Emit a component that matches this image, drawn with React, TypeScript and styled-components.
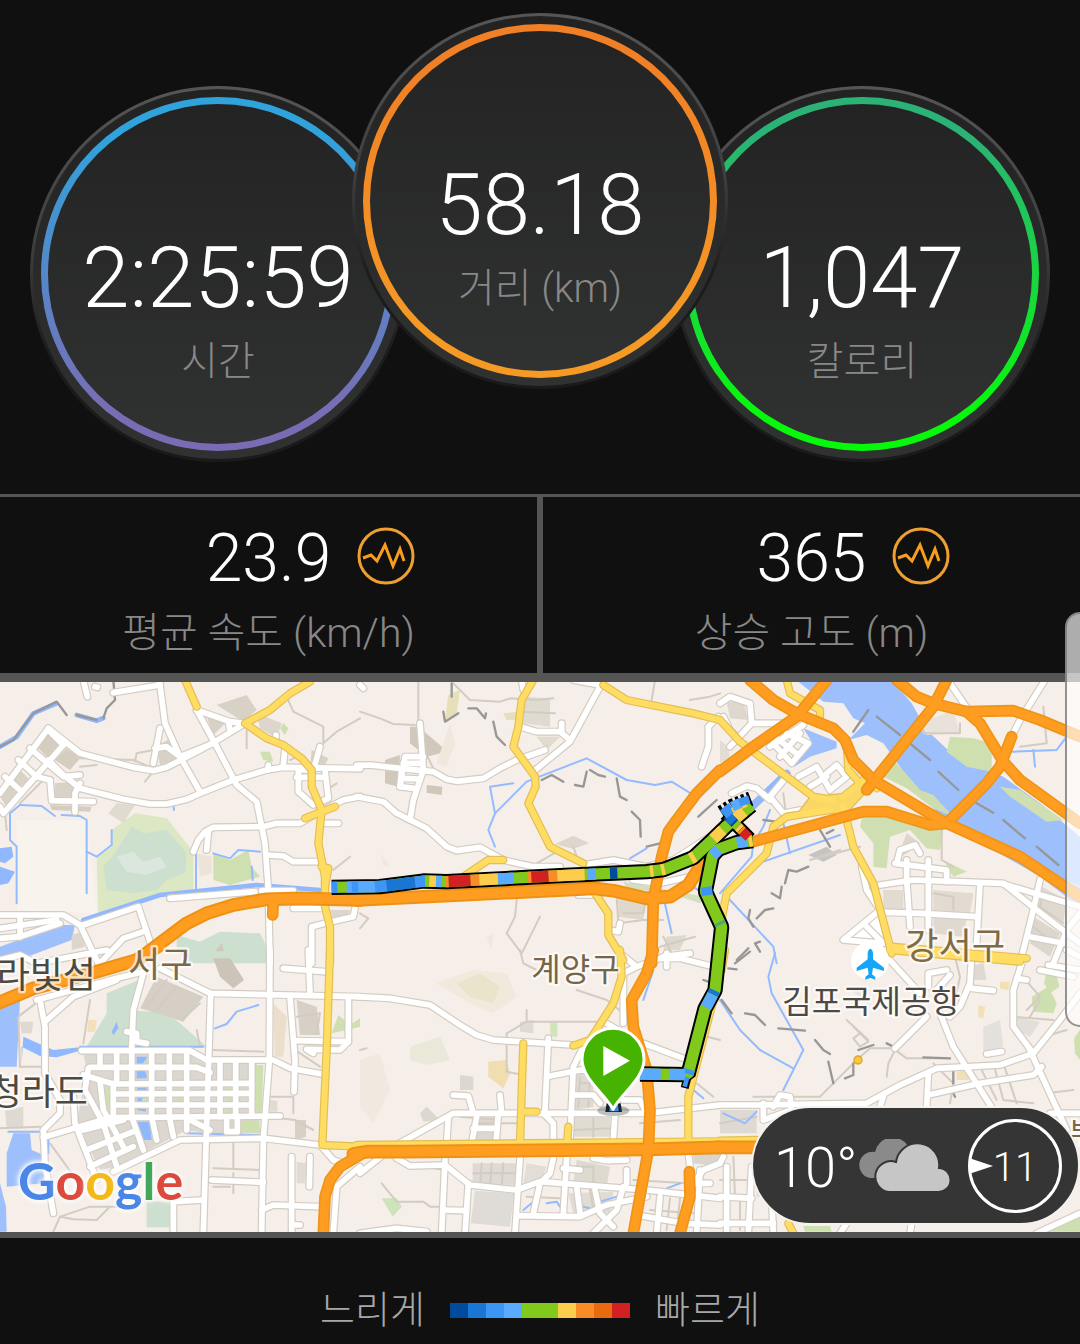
import React from "react";
import styled, { createGlobalStyle } from "styled-components";

const GlobalStyle = createGlobalStyle`
  * { box-sizing: border-box; }
  body {
    margin: 0;
    background: #101010;
    color: #fff;
    font-family: Roboto, "Noto Sans CJK KR", sans-serif;
    font-weight: 300;
  }
`;

const Page = styled.main`
  position: relative;
  min-height: 100vh;
  overflow: hidden;
  background: #101010;
`;

const Dials = styled.section`
  display: flex;
  justify-content: center;
  align-items: flex-start;
  padding: 13px 0 32px;
`;

const Dial = styled.article<{ $raised?: boolean }>`
  flex: none;
  width: 376px;
  height: 376px;
  padding: 3px;
  border-radius: 50%;
  background: linear-gradient(#565656, #3c3c3c 45%, #1c1c1c 70%, #1a1a1a);
  margin: ${(p) => (p.$raised ? "0 -54px" : "73px 0 0")};
  z-index: ${(p) => (p.$raised ? 1 : 0)};
`;

const DialRim = styled.div`
  height: 100%;
  padding: 8px;
  border-radius: 50%;
  background: linear-gradient(#222, #303231);
`;

const DialRing = styled.div<{ $from: string; $to: string }>`
  height: 100%;
  padding: 7px;
  border-radius: 50%;
  background: linear-gradient(${(p) => p.$from} 10%, ${(p) => p.$to} 90%);
`;

const DialFace = styled.div`
  height: 100%;
  padding-top: 120px;
  border-radius: 50%;
  background: linear-gradient(#232323, #303231);
  display: flex;
  flex-direction: column;
  align-items: center;
`;

const DialValue = styled.strong`
  font-size: 85px;
  line-height: 108px;
  font-weight: 300;
`;

const Caption = styled.span<{ $wide?: boolean }>`
  font-size: ${(p) => (p.$wide ? 41 : 40)}px;
  line-height: 60px;
  color: #888;
  white-space: nowrap;
`;

const Stats = styled.section`
  display: grid;
  grid-template-columns: 1fr 1fr;
  gap: 6px;
  padding-top: 3px;
  background: #555;
`;

const Stat = styled.article`
  height: 176px;
  padding-top: 22px;
  background: #101010;
  display: flex;
  flex-direction: column;
  align-items: center;
  gap: 4px;
`;

const StatTop = styled.div`
  width: 100%;
  display: grid;
  grid-template-columns: 1fr auto 1fr;
  align-items: start;
`;

const StatValue = styled.strong`
  grid-column: 2;
  font-size: 66px;
  line-height: 80px;
  font-weight: 300;
`;

const ChartButton = styled.button`
  width: 58px;
  height: 58px;
  margin: 8px 0 0 26px;
  padding: 0;
  border: 0;
  background: none;
  svg { display: block; }
`;

const MapPanel = styled.section`
  position: relative;
  border-top: 9px solid #555;
  border-bottom: 6px solid #555;
  > svg { display: block; width: 100%; height: auto; }
`;

const Logo = styled.span`
  position: absolute;
  left: 18px;
  bottom: 20px;
  font-family: Lato, sans-serif;
  font-weight: 700;
  font-size: 52px;
  line-height: 64px;
  text-shadow: 0 0 5px #fff, 0 0 5px #fff, 0 0 8px #fff;
`;

const Tint = styled.span<{ $c: string }>`
  color: ${(p) => p.$c};
`;

const Weather = styled.aside`
  position: absolute;
  right: 0;
  bottom: 7px;
  width: 329px;
  height: 119px;
  padding: 0 16px 0 21px;
  border: 2px solid #f4f2ef;
  border-radius: 60px;
  background: #353535;
  display: flex;
  align-items: center;
`;

const Temperature = styled.span`
  padding-top: 4px;
  font-size: 56px;
  line-height: 64px;
`;

const Wind = styled.div`
  position: relative;
  width: 94px;
  height: 94px;
  margin-left: auto;
  padding-top: 4px;
  border: 3px solid #fff;
  border-radius: 50%;
  display: flex;
  align-items: center;
  justify-content: center;
  font-size: 40px;
  svg { position: absolute; left: -2px; top: 36px; }
`;

const Legend = styled.footer`
  display: flex;
  justify-content: center;
  align-items: center;
  gap: 25px;
  padding-top: 42px;
`;

const LegendText = styled.span`
  font-size: 38px;
  line-height: 60px;
  color: #a8a8a8;
`;

const Scale = styled.div`
  display: flex;
`;

const Swatch = styled.i<{ $c: string }>`
  width: 18px;
  height: 15px;
  background: ${(p) => p.$c};
`;

const EdgeHandle = styled.div`
  position: absolute;
  top: 612px;
  right: 0;
  width: 15px;
  height: 415px;
  border: 2px solid rgba(120, 120, 120, 0.8);
  border-right: 0;
  border-radius: 16px 0 0 16px;
  background: rgba(255, 255, 255, 0.66);
`;

/* ---------- Map data: six survey sheets, each with its own origin ---------- */

type Sheet = "a" | "b" | "c" | "d" | "e" | "f";
const origin: Record<Sheet, [number, number]> = {
  a: [0, -6], b: [1080, -6], c: [2160, -6],
  d: [0, 804], e: [1080, 804], f: [2160, 804],
};
const sheets = Object.keys(origin) as Sheet[];
type Layer = Record<Sheet, string[]>;

const areas: Record<Sheet, [string, string][]> = {
  a: [
    ["#f9f3ee", "50,420 260,420 290,700 50,690"],
    ["#dce7c3", "290,535 335,500 335,450 405,400 500,415 580,515 580,640 480,650 295,710"],
    ["#cddfcf", "345,520 395,440 430,460 500,450 560,520 555,580 500,600 470,630 400,640 320,630 310,560"],
    ["#dbe7dc", "350,530 400,515 430,545 480,530 500,560 440,585 380,575"],
    ["#cfe0b0", "640,520 690,540 745,510 755,560 780,590 690,615 640,600"],
    ["#eee3d8", "590,520 635,530 635,580 600,590"],
    ["#cddfcf", "530,765 600,785 660,755 780,760 800,800 800,850 570,850 530,810"],
    ["#8fb8ff", "0,505 35,500 40,530 15,550 0,545"],
    ["#8fb8ff", "0,560 45,575 25,610 0,615"],
    ["#9dbffc", "0,800 180,735 225,735 215,780 70,835 0,845"],
    ["#d5cdc0", "145,160 180,195 145,235 110,200"],
    ["#d5cdc0", "200,205 240,235 210,270 165,240"],
    ["#d9d2c6", "50,260 90,300 60,320 30,290"],
    ["#d9d2c6", "30,315 55,345 20,380 0,350"],
    ["#d9d2c6", "165,310 220,305 220,350 165,355"],
    ["#e0dad0", "325,400 350,370 405,375 370,430"],
    ["#d8d1c6", "650,75 740,45 770,90 730,125 690,100"],
    ["#d8d1c6", "620,110 680,125 640,165"],
    ["#dcd6cc", "770,100 845,130 830,175 780,145"],
    ["#cfe0b0", "780,215 810,215 820,245 790,240"],
    ["#cfe0b0", "850,130 865,145 855,165 840,145"],
    ["#d8d1c6", "935,210 985,235 970,265 930,260"],
    ["#d8d1c6", "470,200 510,175 530,240 480,255"],
    ["#d5cdc0", "150,375 275,380 270,395 155,390"],
    ["#ddd6cc", "215,765 245,755 255,800 215,810"],
    ["#ddd6cc", "990,690 1050,690 1045,710 1000,720"],
    ["#d0c8bb", "640,820 665,790 680,840"],
  ],
  b: [
    ["#d0c8bb", "150,140 175,140 240,195 258,215 200,230 150,190"],
    ["#d0c8bb", "75,240 120,225 115,320 75,310"],
    ["#cfc7ba", "200,315 247,320 245,345 200,338"],
    ["#e0dbd0", "490,50 570,55 570,140 490,130"],
    ["#e5dfc0", "430,100 480,95 475,120 440,120"],
    ["#e6dfb8", "265,45 300,30 290,100 255,120"],
    ["#f0e8dc", "270,130 285,190 260,260 230,250 250,190"],
    ["#dcd6cc", "585,492 640,467 687,490 640,507"],
    ["#e0dacf", "530,170 600,170 560,210"],
    ["#dfd8cc", "775,650 860,650 850,720 775,710"],
    ["#dfd8cc", "920,770 980,765 960,810 910,810"],
    ["#d3dfbd", "790,605 1035,650 1020,670 930,640 800,625"],
    ["#efe8df", "60,520 90,560 70,555"],
    ["#efe8df", "380,770 400,760 395,810"],
  ],
  c: [
    ["#9dbffc", "235,5 520,5 575,70 620,150 700,225 850,290 960,370 1080,470 1080,680 960,590 700,440 640,385 590,335 540,260 490,190 440,165 385,180 435,130 400,115 370,70 310,65"],
    ["#9dbffc", "250,145 350,185 350,205 270,230 220,262 235,225 275,185"],
    ["#cfe0b0", "690,170 760,175 815,190 815,275 740,260 680,215"],
    ["#cdddb0", "520,240 575,300 600,330 640,345 700,410 640,385 560,325 490,290"],
    ["#cfdfb2", "430,395 520,410 620,430 670,450 660,510 620,505 570,450 510,470 500,565 460,560 460,490 420,440"],
    ["#cfdfb2", "840,320 900,330 1030,420 980,425 870,350"],
    ["#cfdfb2", "670,540 740,575 700,590"],
    ["#e4ddd4", "0,180 25,200 30,240 0,250"],
    ["#ddd7ce", "20,65 70,65 85,120 30,115"],
    ["#ddd6cc", "560,460 600,490 560,520 530,540"],
    ["#e1dbd2", "490,630 550,630 550,690 490,690"],
    ["#e1dbd2", "640,630 760,640 750,700 640,690"],
    ["#dfd9d0", "640,715 740,715 730,770 640,760"],
    ["#dfd9d0", "965,620 1040,660 1030,730 950,680"],
    ["#dcd6cd", "940,710 1020,760 990,830 930,790"],
    ["#c5c3c1", "265,525 320,500 350,525 310,545"],
    ["#e8e2da", "600,130 700,90 720,160 620,165"],
    ["#fff", "370,775 480,690 500,790"],
  ],
  d: [
    ["#9dbffc", "0,165 60,150 50,350 0,350"],
    ["#8fb8ff", "70,260 160,300 240,292 240,302 170,322 120,318 65,290 65,340"],
    ["#9dbffc", "40,550 90,550 95,600 130,615 130,700 20,710 20,610"],
    ["#9dbffc", "0,700 18,770 20,845 0,845"],
    ["#cddfcf", "320,130 430,85 390,180 500,190 540,220 620,290 260,290 320,190"],
    ["#cddfcf", "585,5 800,0 800,38 690,40"],
    ["#cddfcf", "440,755 510,755 510,832 440,832"],
    ["#d6cfc6", "470,80 610,140 550,215 420,175"],
    ["#ccc4b8", "640,25 690,25 732,90 700,115 660,80"],
    ["#ebdfcb", "820,160 860,200 850,320 825,320"],
    ["#f3dfb8", "265,210 290,210 285,245 262,245"],
    ["#dedad2", "60,215 100,215 95,250 65,250"],
    ["#dedad2", "15,480 70,470 70,535 20,535"],
    ["#dcd7d0", "250,310 560,310 620,345 620,550 560,540 350,650 300,660 230,520 260,360"],
    ["#dcd7d0", "632,335 770,335 780,550 632,550"],
    ["#8fb8ff", "410,320 440,320 440,385 410,385"],
    ["#8fb8ff", "412,410 440,410 438,485 412,480"],
    ["#8fb8ff", "412,515 450,515 455,570 420,570"],
    ["#cfe0b0", "425,345 440,325 440,375"],
    ["#cfe0b0", "425,450 440,430 438,480"],
    ["#cfe0b0", "310,410 328,415 326,470 312,475"],
    ["#cfe0b0", "528,410 548,440 535,480"],
    ["#cfe0b0", "680,410 700,410 700,490 680,490"],
    ["#cfe0b0", "768,345 790,345 785,490 768,480"],
    ["#cfe0b0", "725,512 778,512 778,548 722,545"],
    ["#cfe0b0", "995,250 1015,195 1050,225 1080,205 1080,230 1040,240"],
    ["#d6d0c6", "890,150 950,170 960,255 900,255"],
    ["#d6d0c6", "885,510 918,510 918,560 885,570"],
    ["#e0dcd5", "890,635 920,640 915,700 890,700"],
    ["#e0dcd5", "808,450 832,452 832,485 808,485"],
    ["#8fb8ff", "350,215 355,235 340,255 335,245"],
  ],
  e: [
    ["#efeadb", "230,100 340,60 440,70 470,140 400,190 330,160"],
    ["#e9e4cb", "290,100 360,70 420,110 400,160 330,140"],
    ["#eae8d8", "150,290 240,260 270,330 200,345 150,330"],
    ["#f0e9e0", "0,330 60,310 90,420 40,520 0,470"],
    ["#f0ddb0", "385,335 440,330 450,370 430,415 385,380"],
    ["#dedbd3", "480,215 520,210 520,250 480,245"],
    ["#d0e3bb", "570,215 592,220 592,262 572,258"],
    ["#dfdcd7", "345,722 462,730 450,830 332,820"],
    ["#dfdbd4", "338,640 475,640 472,705 338,700"],
    ["#dcd7cf", "345,500 410,500 410,570 340,570"],
    ["#e0dbd3", "640,500 750,500 750,560 640,560"],
    ["#dedad2", "640,370 700,360 700,470 640,480"],
    ["#cde3ba", "65,745 110,745 125,770 98,800"],
    ["#dad6cf", "1000,600 1080,600 1080,650 1000,640"],
    ["#dedad2", "650,630 750,650 740,710 640,700"],
    ["#e2ded7", "500,640 560,650 540,700 490,700"],
    ["#e0dcd5", "625,730 760,725 750,790 640,790"],
    ["#dcd7cf", "300,375 340,380 340,420 300,420"],
    ["#dcd7cf", "180,490 200,470 240,510 190,515"],
  ],
  f: [
    ["#cfe0b0", "980,65 1010,75 1018,110 990,130 972,100"],
    ["#cfe0b0", "935,140 985,110 1010,160 1000,190 940,185"],
    ["#cfe0b0", "1062,265 1080,240 1080,330 1065,310"],
    ["#cfe0b0", "250,828 330,828 335,845 255,845"],
    ["#cfe0b0", "980,845 1080,800 1080,845"],
    ["#e4e1dd", "790,230 840,210 850,290 790,310"],
    ["#e2deda", "880,200 960,215 930,260 890,240"],
    ["#f1dfb5", "710,365 750,360 745,390 710,390"],
    ["#f1dfb5", "840,95 870,95 865,120 840,115"],
    ["#f1dfb5", "775,165 795,170 790,205 775,200"],
    ["#dedad3", "0,480 110,480 110,550 0,550"],
    ["#dedad3", "110,620 160,640 150,740 110,740"],
    ["#e5e1db", "390,120 430,110 420,140"],
    ["#dedad3", "740,50 790,40 800,90 760,90"],
  ],
};

const lanes: Layer = {
  a: ["860,50 880,95 970,140 970,190 1010,155 1080,115", "405,245 410,220 460,210", "1000,570 1050,530", "240,235 400,240 460,265", "740,150 740,205", "290,255 240,260", "20,450 15,400", "905,225 870,240", "1010,310 980,330", "130,300 60,370", "435,305 455,280"],
  b: ["175,0 175,130", "0,95 60,115 100,132 165,135", "280,10 330,60 420,65 450,55 530,60 580,55", "480,95 585,100", "470,660 465,710 440,760 485,820 540,710", "640,500 655,545", "530,550 600,510", "885,0 875,60", "770,650 775,730 850,720 910,720", "990,60 1050,50 1080,40", "910,770 940,830", "860,650 850,700 790,700", "900,800 1005,770", "0,700 25,715 0,745", "200,225 220,265"],
  c: ["600,120 610,160 720,160 720,130", "970,80 980,190 900,200", "665,450 665,540 700,560", "190,340 200,420 260,410", "640,640 700,650 700,690", "360,510 270,540 420,500", "970,640 960,680 1030,730", "940,740 1000,790", "1020,600 1080,620"],
  d: ["60,350 55,200 120,150", "60,350 130,350", "160,845 180,800 270,770 370,770", "180,800 220,808 290,810 330,770", "640,655 780,660", "700,580 700,655", "270,150 250,280", "0,535 120,530", "890,200 960,190 950,250", "805,440 880,440 880,490", "640,710 690,710", "545,210 600,160", "500,90 440,170", "530,110 470,180", "640,300 790,305", "150,580 230,690", "590,240 600,290", "800,500 885,510 940,540", "700,670 700,730", "885,300 960,350"],
  e: ["440,365 440,250 500,215 720,215", "440,365 490,375", "65,700 110,755 190,755 210,770 245,770", "360,715 365,640", "395,640 390,715", "430,640 425,715", "340,670 470,670", "480,0 490,40 530,60", "650,120 740,150 790,190", "500,180 500,215", "300,500 420,510", "470,520 350,520", "660,380 655,470", "690,380 685,470", "660,400 740,400", "640,540 760,535", "700,500 700,560", "1060,440 1010,400", "640,650 700,650 700,700", "690,720 700,780", "820,690 980,700", "870,780 1000,790", "0,300 20,295", "150,640 250,660", "500,740 600,745", "1000,250 1080,270", "930,745 920,840", "960,745 950,840", "840,520 960,510"],
  f: ["300,440 410,330 450,295 520,295 560,325 690,325", "400,230 445,275 420,290 400,265 420,250", "500,380 505,340 525,300", "380,210 445,270", "780,350 830,450", "850,340 890,460", "890,60 960,140 920,180", "880,200 1000,210", "0,520 110,500", "40,620 45,740", "980,430 1060,420", "970,260 1040,240", "820,340 850,450 940,460", "300,440 240,440 100,440", "700,0 720,80 700,170", "930,200 960,150", "0,690 90,690", "60,750 60,840", "640,340 700,400 690,460"],
};

const streets: Layer = {
  a: ["145,145 240,220 400,262 460,272 500,262 600,210 645,185 735,130", "590,90 690,125 735,130", "685,125 690,150", "145,145 0,340", "190,195 10,400 0,380", "90,205 190,290 240,285", "145,240 190,285 240,325 370,358 450,372 500,372 560,358 600,340 700,300 800,270 850,262 1080,266", "145,150 190,195", "55,240 110,290 150,300", "15,290 65,335", "150,300 155,362 280,365", "225,395 225,340 240,310", "478,0 495,130 540,230 600,335", "480,145 460,250", "465,205 500,200 540,230 640,190", "590,90 645,190 710,315 770,365 795,490 805,630 810,850", "340,38 480,15", "250,0 262,50", "580,515 595,480 615,455 640,442 790,440 830,430 900,430 960,395 1030,360 1080,350", "625,455 620,510", "800,525 850,528 880,545 960,545", "510,655 765,635", "785,632 880,632", "855,205 850,255", "960,200 940,270 895,270 895,335 940,375 985,355 975,270", "975,292 890,292", "965,430 1015,430", "0,705 190,705 240,735 295,850", "0,745 170,720", "0,775 60,770 180,730", "60,710 60,770", "250,735 415,680 455,800", "300,850 370,775 430,755", "880,685 965,685", "935,850 935,740 975,730 1060,710 1065,685", "828,165 828,180", "805,255 805,270", "285,20 292,22"],
  b: ["-10,256 30,255 120,265 220,275 260,298 290,304 370,295 420,265 470,240 555,210", "180,130 190,270 160,360 150,420", "190,230 135,230 120,320 160,325", "125,265 120,320", "130,295 175,297", "130,250 180,250", "-10,350 70,365 110,400 200,445 260,500 290,512 360,502 430,540 520,560 600,560", "720,20 630,185 520,275", "480,140 530,155 600,155 630,180", "605,130 605,155", "1075,110 1045,140 1045,200 1025,260", "670,555 760,540 860,560 940,540 1080,450", "820,600 900,610 990,590", "655,645 720,645", "780,730 775,755 750,750", "485,0 490,30", "640,0 720,15", "0,15 10,25", "990,820 910,830"],
  c: ["0,70 30,50 90,70 95,130 30,200", "95,130 200,130", "50,170 30,150 10,110", "150,200 250,135", "160,190 215,250 265,190 200,160", "180,230 240,160", "170,175 235,225", "235,290 290,260 330,330 380,290 350,255 320,280", "270,320 320,290", "200,290 150,350 190,400 240,390", "35,340 80,318 110,325 150,360", "480,615 580,600 850,610 950,690 1080,790", "850,612 1080,680", "530,550 540,510 585,495 600,520", "525,550 680,570 680,605", "560,540 560,600 570,740", "625,540 625,750", "495,697 600,700 770,710", "780,610 770,790", "960,600 940,690 900,850", "930,770 1030,790", "1000,850 1040,750 1080,700", "975,0 900,120 875,170", "690,10 745,90", "425,560 440,630 480,690 370,780 490,790 440,740", "1040,810 1080,830"],
  d: ["110,150 350,85 430,65", "430,70 400,180 395,300", "120,150 135,230 135,370 180,450 180,490 130,540 135,640 160,790", "135,215 220,140 350,90", "480,55 630,130 1080,140", "632,130 610,850", "810,0 808,330 790,570 785,850", "925,0 930,130", "870,140 885,330 882,425", "850,55 975,65", "245,302 570,302 620,330 820,330 870,355 965,372", "890,272 1045,275", "1045,145 1045,275 1020,300 920,298 940,310", "300,310 300,345", "350,310 350,390", "395,300 395,500 430,600", "455,310 455,500 470,570", "508,310 508,500 520,560", "560,310 560,540", "660,335 660,500", "707,335 707,500", "755,335 755,490", "270,352 590,352 630,368", "250,375 340,402 750,400", "340,432 750,430", "340,465 750,465", "130,562 330,503 840,498", "340,665 540,570 790,565 960,585", "265,355 255,420 310,520 350,650", "220,440 225,520 290,690", "300,395 310,480 370,590", "340,400 340,500", "260,600 400,545", "250,540 370,510", "270,650 400,590", "380,245 410,250 410,275 440,280", "680,505 680,545 712,545 712,505", "560,505 630,540", "635,690 790,697", "520,850 520,755 610,750", "785,780 820,765 955,770", "875,620 875,850", "930,620 928,710", "875,825 900,825", "965,590 1000,630 1030,640", "1080,650 1010,710 1000,850", "0,30 60,15 110,40 320,0"],
  e: ["-10,140 90,145 210,165 300,225 350,255 400,270 640,285", "565,265 555,480", "0,670 100,590 280,490 860,490 1080,465", "560,380 660,360 750,370", "670,290 640,350 630,570", "640,435 700,435 720,460", "280,435 325,438 340,490", "420,435 425,490", "265,500 260,580", "350,500 335,580", "415,490 408,580", "340,535 410,535", "550,490 580,520 580,570", "765,490 760,570", "790,450 840,450 855,480", "850,280 970,325", "740,220 790,250", "780,10 830,50 790,70 790,220", "830,50 900,25 960,25 1080,55", "920,10 920,50", "110,625 150,648 255,645 330,705 470,720 540,695 860,720 1080,745", "255,630 245,850", "325,700 315,850", "480,625 465,850", "580,625 570,670 540,700 520,790", "620,625 610,790", "700,625 740,632 800,630", "610,655 660,660", "470,797 660,800 740,765 860,740", "250,780 320,782", "650,710 660,790", "705,720 720,790 760,830", "790,710 770,780 700,850", "800,660 800,700", "900,740 890,850", "830,795 970,820 1080,825", "985,610 990,650", "1020,660 1010,850", "1080,640 1030,660 1000,700 1050,700", "0,850 110,835 200,845"],
  f: ["0,465 110,465 440,460 540,405 650,355 840,345 940,310 1020,210 1080,130", "490,440 480,470", "625,370 620,470", "625,435 780,400 940,375 965,350", "660,190 700,290 820,480", "525,295 620,200", "600,130 500,20", "925,290 1040,540", "905,40 880,120 880,230 940,310", "755,20 750,100 720,170 690,200", "755,115 820,122", "800,312 845,305", "625,110 625,70 680,60", "690,75 650,120", "920,90 890,85", "160,470 180,435 210,440 215,480 130,510 130,460", "20,650 20,850", "95,650 85,850", "0,740 95,745", "0,820 160,820", "155,745 160,850", "0,640 10,620", "950,850 1080,790", "990,490 1080,490", "380,820 360,850", "575,820 570,850", "985,45 1080,60", "960,60 1060,80"],
};

const creeks: Layer = {
  a: ["60,375 125,378 165,408", "60,375 30,400 30,480 50,500 50,670", "185,405 240,408 260,420 260,640", "260,515 290,530 335,495 335,450", "588,520 588,635", "640,520 690,535 715,510 780,515", "755,560 758,600", "520,375 522,390"],
  b: ["405,500 385,450 405,400 390,320 460,310", "405,400 500,305 680,235 800,300 885,315 935,305 1000,345", "810,535 860,505", "910,650 935,760", "1000,620 1080,680"],
  c: ["130,545 360,465", "30,660 160,800 170,850", "150,390 130,440 100,490 95,530 0,640", "820,205 880,215 1010,210 1040,170", "940,210 945,260", "190,430 210,520"],
  d: ["240,290 610,290", "645,235 680,222 710,185 775,165", "25,545 120,545", "145,570 145,610", "560,550 780,555"],
  e: ["880,60 850,150", "490,780 520,755", "670,770 690,775", "720,755 770,740", "560,760 590,755 600,770", "790,755 860,740", "920,715 960,700", "1000,420 1030,445"],
  f: ["165,10 145,80 155,130 250,300 190,420", "0,150 60,240 120,300 220,355", "10,490 75,520 110,485"],
};

const trails: Layer = {
  a: ["0,200 40,180 100,100 170,65 200,105", "230,105 290,120", "310,115 320,85 345,60 340,0"],
  b: ["275,10 275,50", "250,95 255,125 295,100", "325,85 350,85 375,115 378,100", "400,125 410,170 435,195", "545,300 575,285 610,305", "645,315 670,320 680,275", "690,270 715,285 735,290", "770,295 780,350 800,360", "815,395 840,420 842,470", "860,500 900,490", "1015,410 1070,360"],
  c: ["470,110 540,165", "570,190 630,240", "655,275 715,330", "770,370 820,398", "850,420 915,475", "950,500 1015,555", "445,90 400,155", "195,610 205,570 230,575 265,560", "185,620 180,655 155,640", "160,685 135,690 110,715", "90,690 85,715 100,740", "300,450 330,500", "320,460 340,450", "120,785 105,790 120,815", "130,420 170,425", "50,840 85,805"],
  d: [],
  e: ["1030,90 1045,95"],
  f: ["45,40 90,5", "25,55 50,58", "5,150 35,190", "75,190 105,195 135,225", "175,235 255,242", "285,270 310,300 330,312", "325,335 340,400", "400,340 400,375 375,385", "415,300 460,285", "500,280 520,290", "610,322 690,325", "700,365 700,400", "700,430 705,440"],
};

const avenues: Layer = {
  a: ["555,0 590,80", "930,5 870,40 810,90 735,130 800,175 850,195 905,235 935,270 935,320 965,390 955,490 975,590 975,680 990,740 990,850", "915,415 1005,380", "965,560 985,565 975,620"],
  b: ["520,0 485,60 475,140 460,200 525,290 527,320 505,370 570,500 620,525 670,550", "730,15 800,60 1000,100 1080,120", "310,590 385,540 430,540", "705,640 745,700 745,765 790,840"],
  c: ["200,0 210,40 300,90 300,110", "0,120 60,185 280,350 340,360", "380,190 385,270 420,310 370,350", "430,300 470,325", "330,390 200,410 160,440 140,520 20,640 0,740", "370,380 400,500 460,610 515,820", "515,800 920,835"],
  d: ["990,0 980,300 967,585 1080,590"],
  e: ["490,280 480,580", "490,485 530,485", "-10,585 1080,574", "625,530 622,570", "640,287 690,270 760,160 785,80 780,0", "985,575 985,440 1060,150 1080,60"],
  f: ["510,0 900,35", "0,572 110,570", "205,820 220,850", "15,0 5,60"],
};

const highways: Layer = {
  a: ["820,660 818,705"],
  b: ["1080,270 1010,340 950,420 925,455 905,530 880,660 875,850"],
  c: ["90,0 160,60 230,100 340,145 375,180 400,240 460,300 670,425 900,530 1080,650", "320,0 230,110 100,200 0,275", "440,330 640,80 680,0", "530,0 590,50 640,70 740,95 880,92 960,120 1080,170", "740,95 780,130 850,245 900,300 1080,430", "875,170 840,260 800,310 680,430 630,435 500,395 430,395 100,485"],
  d: ["970,850 975,740 990,690 1020,650 1080,615"],
  e: ["880,0 860,70 815,150 820,230 860,360 870,480 865,600 820,850", "988,665 990,740 960,850"],
  f: [],
};

const trunks: Layer = {
  a: ["400,850 480,790 560,730 620,700 700,675 800,658 900,655 1080,660"],
  b: ["-10,660 300,645 700,625 760,632 860,655 930,650 985,615 1040,530"],
  c: [],
  d: ["-20,165 100,115 290,65 410,30 480,-15"],
  e: ["-20,612 20,605 130,605 860,598 1080,592"],
  f: ["-10,592 110,592"],
};

const Lines = ({ layer, color, width }: { layer: Layer; color: string; width: number }) => (
  <g fill="none" stroke={color} strokeWidth={width} strokeLinecap="round" strokeLinejoin="round">
    {sheets.map((s) => (
      <g key={s} transform={`translate(${origin[s].join(" ")})`}>
        {layer[s].map((points, i) => <polyline key={i} points={points} />)}
      </g>
    ))}
  </g>
);

/* ---------- Ride track, coloured by speed ---------- */

const speed = ["#004b9b", "#1976d2", "#3d95f5", "#5aabff", "#82c91e", "#82c91e", "#fccd4d", "#fa8c28", "#ea6a10", "#d32020"];
const [navy, blue, sky, pale, green, , yellow, orange, , red] = speed;

const westLeg: [number, number][] = [[995, 616], [1140, 614], [1270, 597], [1340, 599], [1680, 581], [1940, 569], [1990, 563], [2080, 527], [2145, 466], [2180, 432], [2254, 370]];
const westBands: [number, number, string][] = [
  [996, 1012, sky], [1040, 1125, pale], [1055, 1075, sky], [1125, 1162, sky], [1160, 1246, blue], [1246, 1276, sky],
  [1276, 1288, green], [1288, 1308, yellow], [1308, 1326, pale], [1336, 1346, orange], [1346, 1412, red], [1412, 1438, orange],
  [1438, 1494, yellow], [1494, 1540, pale], [1584, 1594, orange], [1594, 1646, red], [1646, 1672, orange], [1672, 1754, yellow],
  [1764, 1788, pale], [1830, 1852, navy], [1950, 1960, yellow], [1984, 1994, yellow], [2072, 2084, yellow], [2140, 2168, yellow],
  [2206, 2232, yellow], [2242, 2254, green],
];
const yAt = (x: number) => {
  const i = Math.max(1, westLeg.findIndex((p) => p[0] >= x));
  const [x0, y0] = westLeg[i - 1];
  const [x1, y1] = westLeg[i];
  return y0 + ((x - x0) / (x1 - x0)) * (y1 - y0);
};

const returnLeg = "2258,476 2210,482 2155,502 2137,522 2116,628 2165,735 2145,925 2115,980 2064,1178 1920,1176";
const returnBands: [string, string][] = [
  ["2257,476 2246,478", yellow], ["2240,478 2210,482", pale], ["2156,502 2138,520", pale], ["2118,615 2122,640", sky], ["2158,720 2162,728", "#4aa87a"],
  ["2144,925 2138,938", blue], ["2138,938 2118,976", pale], ["2068,1162 2064,1176", sky],
  ["2055,1178 2010,1177", pale], ["1982,1177 1920,1176", pale],
];

const Track = () => (
  <g fill="none" strokeLinejoin="bevel">
    <g stroke="#000">
      <polyline points={westLeg.map((p) => p.join(",")).join(" ")} strokeWidth={46} />
      <polyline points="2176,396 2250,470" strokeWidth={40} />
      <polyline points={returnLeg} strokeWidth={46} />
      <polyline points="2064,1180 2054,1218" strokeWidth={24} />
      <polyline points="2164,392 2196,372 2252,350" strokeWidth={44} strokeDasharray="10 8" />
    </g>
    <g stroke={green} strokeWidth={34}>
      <polyline points={westLeg.map((p) => p.join(",")).join(" ")} />
      <polyline points={returnLeg} />
    </g>
    <g strokeWidth={34}>
      {westBands.map(([a, b, c], i) => <line key={i} x1={a} y1={yAt(a)} x2={b} y2={yAt(b)} stroke={c} />)}
      {returnBands.map(([p, c], i) => <polyline key={i} points={p} stroke={c} />)}
    </g>
    <g strokeWidth={28}>
      <polyline points="2180,400 2205,425" stroke={navy} />
      <polyline points="2186,406 2200,420" stroke={blue} />
      <polyline points="2205,425 2214,434" stroke={green} />
      <polyline points="2214,434 2222,442" stroke={yellow} />
      <polyline points="2222,442 2228,448" stroke={orange} />
      <polyline points="2228,448 2246,466" stroke={red} />
      <polyline points="2170,398 2196,375" stroke={sky} strokeWidth={32} />
      <polyline points="2196,385 2240,366" stroke={yellow} strokeWidth={16} />
      <polyline points="2196,374 2222,362" stroke={pale} strokeWidth={30} />
      <polyline points="2218,362 2248,352" stroke={sky} strokeWidth={24} />
      <polyline points="2062,1185 2054,1214" stroke={sky} strokeWidth={14} />
    </g>
  </g>
);

const places: [string, number, number, number, string, "start" | "end"][] = [
  ["라빛섬", 288, 918, 108, "#4a4a40", "end"],
  ["서구", 384, 885, 105, "#7a6848", "start"],
  ["계양구", 1594, 896, 96, "#75664a", "start"],
  ["강서구", 2715, 832, 109, "#7f6b48", "start"],
  ["김포국제공항", 2346, 994, 97, "#4b4a46", "start"],
  ["청라도", 264, 1268, 108, "#4a4a40", "end"],
  ["부", 3206, 1384, 84, "#75664a", "start"],
];

const RideMap = () => (
  <svg viewBox="0 0 3240 1650" role="img" aria-label="지도">
    <rect width="3240" height="1650" fill="#f6eee8" />
    {sheets.map((s) => (
      <g key={s} transform={`translate(${origin[s].join(" ")})`}>
        {areas[s].map(([fill, points], i) => <polygon key={i} fill={fill} points={points} />)}
      </g>
    ))}
    <Lines layer={lanes} color="#d3ccc2" width={6} />
    <Lines layer={creeks} color="#93bbff" width={6} />
    <g fill="none" stroke="#8fb8ff" strokeWidth={14} strokeLinecap="round">
      <polyline points="0,194 50,165 100,94 170,64" />
      <polyline points="230,99 290,116 310,108" />
      <polyline points="250,714 480,639 770,609 960,624" />
      <polyline points="2250,380 2360,275" strokeWidth={24} />
    </g>
    <Lines layer={trails} color="#979797" width={7} />
    <Lines layer={streets} color="#d2ccc2" width={24} />
    <Lines layer={streets} color="#fff" width={17} />
    <Lines layer={avenues} color="#e3bd55" width={25} />
    <polygon points="2430,345 2530,334 2590,284 2595,334 2540,394 2390,398" fill="#fbd866" stroke="#e3bd55" strokeWidth={4} />
    <Lines layer={avenues} color="#ffdd63" width={18} />
    <Lines layer={highways} color="#ef9417" width={35} />
    <Lines layer={trunks} color="#ee9214" width={41} />
    <Lines layer={highways} color="#ff9d20" width={25} />
    <Lines layer={trunks} color="#ff9d20" width={29} />
    <circle cx={2574} cy={1134} r={12} fill="#fbc83e" stroke="#d9a52c" strokeWidth={4} />
    <Track />
    <circle cx={2610} cy={836} r={57} fill="#fff" />
    <path
      transform="translate(2611 838)"
      fill="#17a5f7"
      d="M0,-38q7,2 8,14v18l33,25v10l-33,-10-3,20 10,8v8l-15,-5-15,5v-8l10,-8-3,-20-33,10v-10l33,-25v-18q1,-12 8,-14z"
    />
    <g fontFamily='"Noto Sans CJK KR", sans-serif' fontWeight={400} stroke="#fff" strokeOpacity={0.7} strokeWidth={14} strokeLinejoin="round" paintOrder="stroke">
      {places.map(([name, x, y, size, fill, anchor]) => (
        <text key={name} x={x} y={y} fontSize={size} fill={fill} textAnchor={anchor}>{name}</text>
      ))}
    </g>
    <ellipse cx={1840} cy={1286} rx={48} ry={16} fill="#000" opacity={0.25} />
    <path d="M1820,1264h42l4,26h-50z" fill="#10202c" />
    <path d="M1830,1268h24l2,20h-28z" fill="#3b8fdf" />
    <path
      d="M1839,1282C1820,1240 1746,1192 1746,1132a93,93 0 0 1 186,0C1932,1192 1858,1240 1839,1282z"
      fill="#46b300"
      stroke="#fff"
      strokeWidth={9}
      strokeLinejoin="round"
    />
    <path d="M1810,1092l80,44-80,46z" fill="#fff" />
  </svg>
);

const PulseIcon = () => (
  <svg viewBox="0 0 58 58" width="58" height="58" fill="none" stroke="#f99d1c" strokeWidth="3" strokeLinejoin="miter">
    <circle cx="29" cy="29" r="27" stroke="#ee9f30" />
    <path d="M6 31l8-3 6 6 8-16 8 21 7-17 4 12" />
  </svg>
);

const CloudIcon = () => (
  <svg viewBox="0 0 94 54" width="94" height="54">
    <path fill="#8a8a8a" d="M13 39a13 13 0 0 1 5-26A18 18 0 0 1 51 7L40 39z" />
    <path
      fill="#c6c6c6"
      stroke="#353535"
      strokeWidth="2"
      d="M32 53a15.500 15.500 0 1 1 7-30A21.500 21.500 0 0 1 82 29a12 12 0 0 1-1 24z"
    />
  </svg>
);

const dials = [
  { value: "2:25:59", label: "시간", from: "#30a3dc", to: "#7a6cb4" },
  { value: "58.18", label: "거리 (km)", from: "#f07f26", to: "#f59b25", raised: true },
  { value: "1,047", label: "칼로리", from: "#2bb277", to: "#08f80c" },
];

const stats = [
  { value: "23.9", label: "평균 속도 (km/h)" },
  { value: "365", label: "상승 고도 (m)" },
];

const google: [string, string][] = [["G", "#4a86e8"], ["o", "#dc4a3e"], ["o", "#f3b916"], ["g", "#4a86e8"], ["l", "#3fa65a"], ["e", "#dc4a3e"]];

export default function App() {
  return (
    <Page>
      <GlobalStyle />
      <Dials>
        {dials.map((d) => (
          <Dial key={d.label} $raised={d.raised}>
            <DialRim>
              <DialRing $from={d.from} $to={d.to}>
                <DialFace>
                  <DialValue>{d.value}</DialValue>
                  <Caption>{d.label}</Caption>
                </DialFace>
              </DialRing>
            </DialRim>
          </Dial>
        ))}
      </Dials>
      <Stats>
        {stats.map((s) => (
          <Stat key={s.label}>
            <StatTop>
              <StatValue>{s.value}</StatValue>
              <ChartButton aria-label={s.label}><PulseIcon /></ChartButton>
            </StatTop>
            <Caption $wide>{s.label}</Caption>
          </Stat>
        ))}
      </Stats>
      <MapPanel>
        <RideMap />
        <Logo>{google.map(([ch, c], i) => <Tint key={i} $c={c}>{ch}</Tint>)}</Logo>
        <Weather>
          <Temperature>10°</Temperature>
          <CloudIcon />
          <Wind>
            <svg width="24" height="16" viewBox="0 0 24 16"><path d="M0 0l24 8-24 8z" fill="#fff" /></svg>
            11
          </Wind>
        </Weather>
      </MapPanel>
      <Legend>
        <LegendText>느리게</LegendText>
        <Scale>{speed.map((c, i) => <Swatch key={i} $c={c} />)}</Scale>
        <LegendText>빠르게</LegendText>
      </Legend>
      <EdgeHandle />
    </Page>
  );
}
